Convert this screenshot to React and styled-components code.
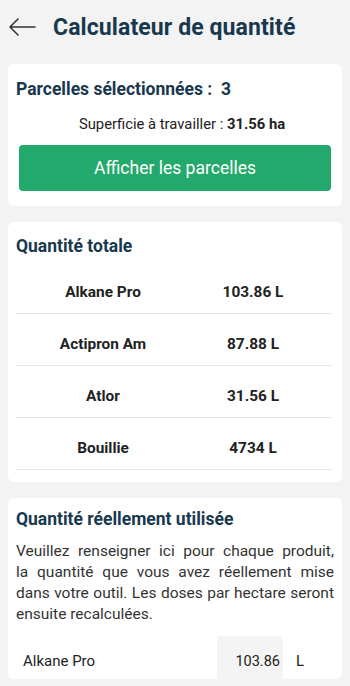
import React from "react";
import styled, { createGlobalStyle } from "styled-components";

const GlobalStyle = createGlobalStyle`
  html, body {
    margin: 0;
    padding: 0;
    background: #f3f3f3;
    font-family: Roboto, "Noto Sans", Arial, sans-serif;
    color: #222;
  }
  * { box-sizing: border-box; }
`;

const Page = styled.div`
  width: 350px;
  height: 686px;
  overflow: hidden;
  background: #f3f3f3;
  display: flex;
  flex-direction: column;
`;

const Header = styled.div`
  height: 54px;
  display: flex;
  align-items: center;
  padding-left: 8px;
  gap: 17px;
`;

const BackButton = styled.button`
  border: none;
  background: none;
  padding: 0;
  display: flex;
  cursor: pointer;
`;

const Title = styled.h1`
  margin: 0;
  font-size: 23px;
  font-weight: 700;
  color: #17384f;
  letter-spacing: 0.1px;
`;

const Card = styled.section`
  background: #fff;
  margin: ${(p) => p.$top || 0}px 8px 0 8px;
  border-radius: 6px;
  padding: ${(p) => p.$padTop || 14}px 8px ${(p) => p.$padBottom ?? 12}px 8px;
  ${(p) => p.$height && `height: ${p.$height}px; overflow: hidden;`}
`;

const CardTitle = styled.h2`
  margin: 0;
  font-size: 17.5px;
  line-height: 20px;
  font-weight: 700;
  color: #17384f;
`;

const Area = styled.p`
  margin: 15px 0 0 0;
  padding-left: 14px;
  text-align: center;
  font-size: 14.8px;
  line-height: 20px;
  color: #222;

  b {
    font-weight: 700;
  }
`;

const GreenButton = styled.button`
  display: block;
  width: calc(100% - 6px);
  margin: 11px 3px 0 3px;
  height: 46px;
  border: none;
  border-radius: 4px;
  background: #22a96b;
  color: #fff;
  font-family: inherit;
  font-size: 17.5px;
  cursor: pointer;
`;

const TotalTable = styled.div`
  margin-top: 6px;
  margin-right: 2px;
`;

const TotalRow = styled.div`
  display: grid;
  grid-template-columns: 174px 126px;
  padding: 20px 0 11px 0;
  border-bottom: 1px solid #e6e6e6;
  font-size: 15.4px;
  line-height: 20px;
  font-weight: 700;
  color: #222;
  text-align: center;
`;

const Notice = styled.p`
  margin: 12px 0 0 0;
  font-size: 15.5px;
  line-height: 21px;
  color: #333;
`;

const NoticeLine = styled.span`
  display: block;
  white-space: nowrap;
  text-align: justify;
  text-align-last: ${(p) => (p.$last ? "left" : "justify")};
`;

const UsedRow = styled.div`
  display: grid;
  grid-template-columns: 1fr 66px 51px;
  align-items: center;
  margin-top: 11px;
  padding-left: 7px;
  font-size: 15px;
  color: #222;
`;

const QtyInput = styled.input`
  height: 50px;
  width: 100%;
  border: none;
  border-radius: 4px 4px 0 0;
  background: #f4f4f4;
  text-align: right;
  padding: 0 3px 0 0;
  font-family: inherit;
  font-size: 14.5px;
  color: #222;
  outline: none;
`;

const Unit = styled.span`
  padding-left: 13px;
`;

const totals = [
  { name: "Alkane Pro", qty: "103.86 L" },
  { name: "Actipron Am", qty: "87.88 L" },
  { name: "Atlor", qty: "31.56 L" },
  { name: "Bouillie", qty: "4734 L" },
];

const noticeLines = [
  "Veuillez renseigner ici pour chaque produit,",
  "la quantité que vous avez réellement mise",
  "dans votre outil. Les doses par hectare seront",
  "ensuite recalculées.",
];

export default function App() {
  return (
    <>
      <GlobalStyle />
      <Page>
        <Header>
          <BackButton aria-label="Retour">
            <svg width="28" height="20" viewBox="0 0 28 20" fill="none">
              <path
                d="M27 10H2M10 2L2 10l8 8"
                stroke="#333"
                strokeWidth="1.6"
                strokeLinecap="round"
                strokeLinejoin="round"
              />
            </svg>
          </BackButton>
          <Title>Calculateur de quantité</Title>
        </Header>

        <Card $top={10} $padTop={15} $padBottom={15}>
          <CardTitle>Parcelles sélectionnées :&nbsp; 3</CardTitle>
          <Area>
            Superficie à travailler : <b>31.56 ha</b>
          </Area>
          <GreenButton>Afficher les parcelles</GreenButton>
        </Card>

        <Card $top={16} $padTop={14} $padBottom={12}>
          <CardTitle>Quantité totale</CardTitle>
          <TotalTable>
            {totals.map((t) => (
              <TotalRow key={t.name}>
                <span>{t.name}</span>
                <span>{t.qty}</span>
              </TotalRow>
            ))}
          </TotalTable>
        </Card>

        <Card $top={16} $padTop={11} $padBottom={0} $height={181}>
          <CardTitle>Quantité réellement utilisée</CardTitle>
          <Notice>
            {noticeLines.map((line, i) => (
              <NoticeLine key={i} $last={i === noticeLines.length - 1}>
                {line}
              </NoticeLine>
            ))}
          </Notice>
          <UsedRow>
            <span>Alkane Pro</span>
            <QtyInput defaultValue="103.86" />
            <Unit>L</Unit>
          </UsedRow>
        </Card>
      </Page>
    </>
  );
}
